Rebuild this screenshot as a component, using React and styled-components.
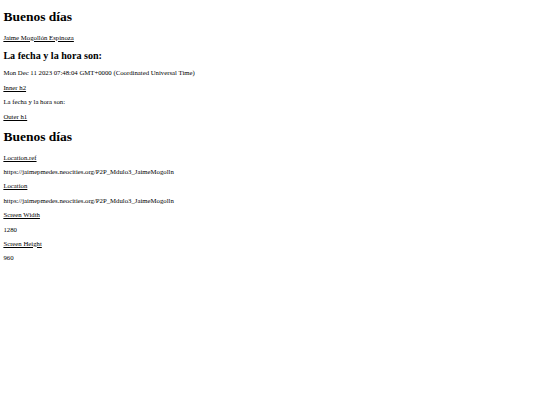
import React from "react";
import styled, { createGlobalStyle } from "styled-components";

const Global = createGlobalStyle`
  html, body { padding: 0; background: #fff; }
  html { margin: 0; }
  body { margin: 0 3.375px; font-family: "Liberation Serif", "Times New Roman", serif; color: #000; }
`;

const Page = styled.main`
  font-size: 6.75px;
  line-height: 7.59px;
`;

const Title = styled.h1`
  font-size: 13.5px;
  line-height: 15.6px;
  font-weight: bold;
  margin: 9.05px 0;
`;

const Subtitle = styled.h2`
  font-size: 10.125px;
  line-height: 11.4px;
  font-weight: bold;
  margin: 8.4px 0;
`;

const Para = styled.p`
  margin: 6.75px 0;
`;

const Label = styled.u`
  text-decoration: underline;
`;

const url = "https://jaimepmedes.neocities.org/P2P_Mdulo3_JaimeMogolln";

export default function App() {
  return (
    <>
      <Global />
      <Page>
        <Title>Buenos días</Title>
        <Para><Label>Jaime Mogollón Espinoza</Label></Para>
        <Subtitle>La fecha y la hora son:</Subtitle>
        <Para>Mon Dec 11 2023 07:48:04 GMT+0000 (Coordinated Universal Time)</Para>
        <Para><Label>Inner h2</Label></Para>
        <Para>La fecha y la hora son:</Para>
        <Para><Label>Outer h1</Label></Para>
        <Title>Buenos días</Title>
        <Para><Label>Location.ref</Label></Para>
        <Para>{url}</Para>
        <Para><Label>Location</Label></Para>
        <Para>{url}</Para>
        <Para><Label>Screen Width</Label></Para>
        <Para>1280</Para>
        <Para><Label>Screen Height</Label></Para>
        <Para>960</Para>
      </Page>
    </>
  );
}
